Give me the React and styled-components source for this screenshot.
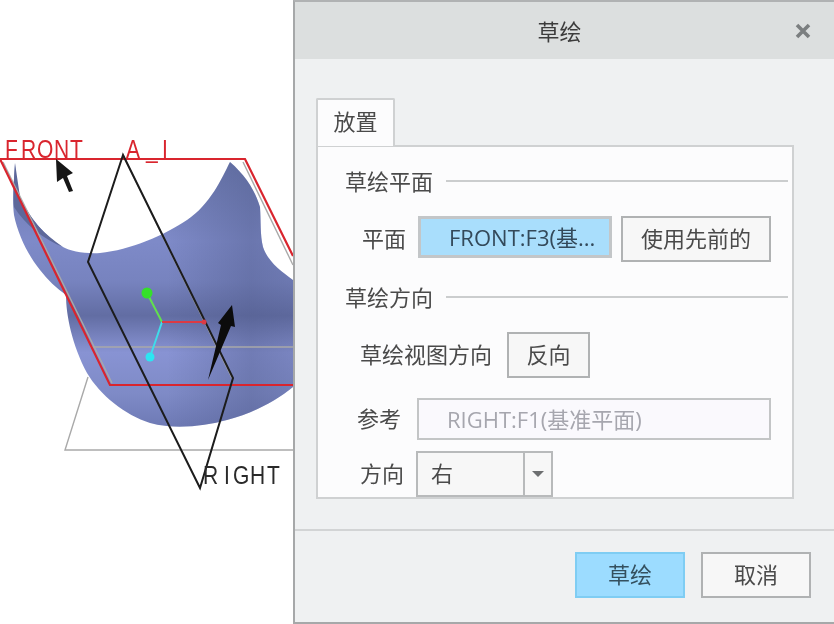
import React from "react";
import styled, { createGlobalStyle } from "styled-components";

const GlobalStyle = createGlobalStyle`
  html, body {
    margin: 0;
    padding: 0;
    background: #fff;
  }
  * {
    box-sizing: border-box;
  }
`;

const Page = styled.div`
  width: 834px;
  height: 624px;
  display: flex;
  overflow: hidden;
  background: #fff;
  color: #4a4a4a;
  font-family: "Open Sans", "Noto Sans CJK SC", sans-serif;
  font-size: 22px;
  filter: blur(0.5px);
`;

const Viewport = styled.svg`
  width: 293px;
  height: 624px;
  flex: none;
  display: block;
`;

const Dialog = styled.div`
  flex: 1;
  display: flex;
  flex-direction: column;
  background: #eff1f2;
  border-left: 2px solid #a6a8a9;
  border-top: 2px solid #b0b2b3;
  border-bottom: 2px solid #a6a8a9;
`;

const TitleBar = styled.div`
  height: 57px;
  flex: none;
  position: relative;
  display: flex;
  align-items: center;
  justify-content: center;
  background: #dcdfdf;
  color: #3c3c3c;
  padding: 0 10px 2px 0;
`;

const CloseIcon = styled.svg`
  position: absolute;
  right: 23px;
  top: 21px;
  width: 16px;
  height: 16px;
`;

const Body = styled.div`
  flex: 1;
  padding: 39px 0 0 21px;
`;

const Tab = styled.div`
  width: 79px;
  height: 48px;
  margin-bottom: -1px;
  position: relative;
  z-index: 1;
  display: flex;
  align-items: center;
  justify-content: center;
  background: #fcfcfd;
  border: 2px solid #cfd1d2;
  border-bottom: none;
  border-radius: 2px 2px 0 0;
  padding-bottom: 6px;
`;

const Panel = styled.div`
  width: 478px;
  height: 354px;
  display: flex;
  flex-direction: column;
  background: #fcfcfd;
  border: 2px solid #cfd1d2;
  padding-top: 19px;
`;

const SectionHead = styled.div`
  height: 30px;
  display: flex;
  align-items: center;
  gap: 13px;
  margin: ${({ $top }) => $top}px 4px 0 27px;
  white-space: nowrap;
  line-height: 30px;

  &::after {
    content: "";
    flex: 1;
    height: 2px;
    background: #cbcdce;
  }
`;

const Row = styled.div`
  display: flex;
  align-items: center;
  height: ${({ $height }) => $height}px;
  margin-top: ${({ $top }) => $top}px;
  padding-left: ${({ $indent }) => $indent}px;
`;

const Label = styled.span`
  white-space: nowrap;
  margin-right: ${({ $gap }) => $gap}px;
  margin-bottom: 4px;
`;

const Button = styled.div`
  width: ${({ $width }) => $width}px;
  height: 46px;
  flex: none;
  display: flex;
  align-items: center;
  justify-content: center;
  background: ${({ $primary }) => ($primary ? "#9cdcff" : "#f7f7f7")};
  border: 2px solid ${({ $primary }) => ($primary ? "#7fcdf3" : "#b0b2b3")};
  color: ${({ $primary }) => ($primary ? "#34505f" : "#4a4a4a")};
  margin-left: ${({ $left }) => $left || 0}px;
  padding-bottom: 4px;
`;

const PlaneField = styled.div`
  width: 194px;
  height: 42px;
  margin-bottom: 4px;
  flex: none;
  display: flex;
  align-items: center;
  padding: 0 0 3px 28px;
  background: #a9defc;
  border: 3px solid #c3c6c8;
  color: #33495a;
  white-space: nowrap;
  overflow: hidden;
`;

const RefField = styled.div`
  width: 354px;
  height: 42px;
  flex: none;
  display: flex;
  align-items: center;
  padding: 0 0 3px 28px;
  background: #faf9fd;
  border: 2px solid #c3c5c6;
  color: #a6a6ae;
  white-space: nowrap;
`;

const Combo = styled.div`
  width: 137px;
  height: 46px;
  flex: none;
  display: flex;
  background: #f7f7f7;
  border: 2px solid #b8babb;
`;

const ComboValue = styled.div`
  flex: 1;
  display: flex;
  align-items: center;
  padding: 0 0 4px 13px;
`;

const ComboArrow = styled.div`
  width: 28px;
  display: flex;
  align-items: center;
  justify-content: center;
  border-left: 2px solid #b8babb;

  &::after {
    content: "";
    border-left: 6px solid transparent;
    border-right: 6px solid transparent;
    border-top: 6px solid #6d6f70;
  }
`;

const Footer = styled.div`
  height: 93px;
  flex: none;
  display: flex;
  justify-content: flex-end;
  gap: 16px;
  padding: 21px 23px 0 0;
  border-top: 2px solid #d2d4d5;
`;

const surfaceOutline =
  "M15 163 C14 180 12 200 14 215 C18 235 28 255 40 270 C48 280 56 288 66 295 C66 315 72 345 87 373 C100 395 125 415 150 423 C175 430 205 426 227 420 C250 414 275 402 293 387 L293 280 C282 272 268 262 263 247 C260 235 261 220 260 207 C255 190 245 175 230 162 C222 178 210 205 187 220 C165 235 130 250 100 253 C85 254 70 251 63 247 C50 240 30 220 20 197 C17 185 15 170 15 163 Z";

// one letter per x, the label font on the graphics window is tall and wide-set
const ViewLabel = ({ x, y, fill, children }) => (
  <text
    x={x}
    y={y}
    fill={fill}
    fontFamily="'Liberation Sans', sans-serif"
    fontSize="21"
    transform={`translate(0 ${y}) scale(1 1.25) translate(0 ${-y})`}
  >
    {children}
  </text>
);

// the model, datum planes and labels on the graphics window
const ModelView = () => (
  <Viewport viewBox="0 0 293 624">
    <defs>
      <linearGradient id="surfaceShade" x1="0" y1="0" x2="0" y2="1">
        <stop offset="0" stopColor="#6a77ad" />
        <stop offset="0.3" stopColor="#7e8ac8" />
        <stop offset="0.45" stopColor="#7783bf" />
        <stop offset="0.58" stopColor="#626da3" />
        <stop offset="0.72" stopColor="#8893d3" />
        <stop offset="0.88" stopColor="#7e8ac6" />
        <stop offset="1" stopColor="#6e7ab5" />
      </linearGradient>
      <linearGradient id="sideShade" x1="0" y1="0" x2="1" y2="0">
        <stop offset="0.55" stopColor="#4e5988" stopOpacity="0" />
        <stop offset="0.85" stopColor="#4e5988" stopOpacity="0.4" />
        <stop offset="1" stopColor="#4e5988" stopOpacity="0.25" />
      </linearGradient>
    </defs>

    <path d={surfaceOutline} fill="url(#surfaceShade)" />
    <path d={surfaceOutline} fill="url(#sideShade)" />
    <path d="M15 163 C14 180 13 195 14 207 C25 225 45 240 63 247 C45 235 30 220 20 197 Z" fill="#5d689a" />

    {/* grey plane edges */}
    <g fill="none" stroke="#a9a9a9" strokeWidth="1.4">
      <path d="M88 377 L65 450 H293" />
      <path d="M90 347 H293" />
      <path d="M123 155 L232 378" />
      <path d="M243 162 L293 265" />
      <path d="M3 162 L112 383" />
    </g>

    {/* FRONT plane */}
    <g fill="none" stroke="#d9252e" strokeWidth="2.2">
      <path d="M0 159 H245 L293 256" />
      <path d="M0 159 L110 385 H293" />
    </g>

    {/* RIGHT plane */}
    <path d="M123 155 L88 262 L200 488 L233 378 Z" fill="none" stroke="#1c1c1c" strokeWidth="2" />

    {/* csys */}
    <g fill="none" strokeWidth="2">
      <path d="M147 293 L162 322" stroke="#62e04e" />
      <path d="M162 322 L150 357" stroke="#3fdcea" />
      <path d="M162 322 H205" stroke="#dc3a44" />
    </g>
    <circle cx="147" cy="293" r="5.5" fill="#35e02a" />
    <circle cx="150" cy="357" r="4.5" fill="#2ce6f2" />
    <circle cx="204" cy="322" r="2.5" fill="#dc3a44" />

    {/* direction arrow */}
    <path d="M208 380 L221 325 L218 323 L232 305 L235 327 L231 326 Z" fill="#0c0c0c" />

    {/* cursor */}
    <path d="M56 159 L73 173 L67 176 L73 191 L69 192 L63 178 L57 182 Z" fill="#161616" />

    <ViewLabel x="5 21 37 54 70" y={158} fill="#d9252e">FRONT</ViewLabel>
    <ViewLabel x="126 146 162" y={158} fill="#d9252e">A_I</ViewLabel>
    <ViewLabel x="203 224 233 250 267" y={484} fill="#2a2a2a">RIGHT</ViewLabel>
  </Viewport>
);

export default function App() {
  return (
    <>
      <GlobalStyle />
      <Page>
        <ModelView />
        <Dialog>
          <TitleBar>
            草绘
            <CloseIcon viewBox="0 0 16 16">
              <path d="M2 2 L14 14 M14 2 L2 14" stroke="#7b7f80" strokeWidth="3.6" fill="none" />
            </CloseIcon>
          </TitleBar>
          <Body>
            <Tab>放置</Tab>
            <Panel>
              <SectionHead $top={0}>草绘平面</SectionHead>
              <Row $top={20} $height={46} $indent={44}>
                <Label $gap={12}>平面</Label>
                <PlaneField>FRONT:F3(基...</PlaneField>
                <Button $width={150} $left={9}>使用先前的</Button>
              </Row>
              <SectionHead $top={20}>草绘方向</SectionHead>
              <Row $top={20} $height={46} $indent={42}>
                <Label $gap={15}>草绘视图方向</Label>
                <Button $width={83}>反向</Button>
              </Row>
              <Row $top={20} $height={42} $indent={39}>
                <Label $gap={16}>参考</Label>
                <RefField>RIGHT:F1(基准平面)</RefField>
              </Row>
              <Row $top={11} $height={46} $indent={42}>
                <Label $gap={12}>方向</Label>
                <Combo>
                  <ComboValue>右</ComboValue>
                  <ComboArrow />
                </Combo>
              </Row>
            </Panel>
          </Body>
          <Footer>
            <Button $width={110} $primary>草绘</Button>
            <Button $width={110}>取消</Button>
          </Footer>
        </Dialog>
      </Page>
    </>
  );
}
